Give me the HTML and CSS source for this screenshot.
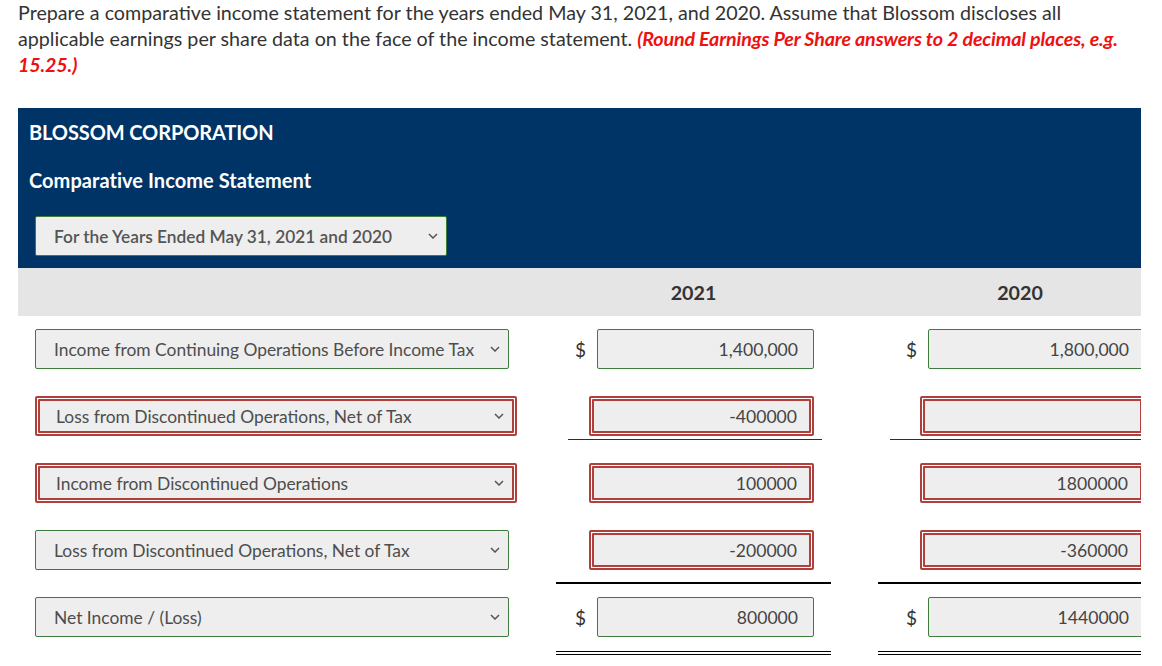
FILE: index.html
```html
<!DOCTYPE html>
<html lang="en">
<head>
<meta charset="utf-8">
<title>Comparative Income Statement</title>
<link rel="stylesheet" href="styles.css">
</head>
<body>
<div class="page">
  <p class="intro">Prepare a comparative income statement for the years ended May 31, 2021, and 2020. Assume that Blossom discloses all applicable earnings per share data on the face of the income statement. <em class="note">(Round Earnings Per Share answers to 2 decimal places, e.g. 15.25.)</em></p>

  <div class="sheet">
    <div class="head">
      <div class="company">BLOSSOM CORPORATION</div>
      <div class="title">Comparative Income Statement</div>
      <div class="select ok period"><span>For the Years Ended May 31, 2021 and 2020</span><svg class="chev" width="10" height="6" viewBox="0 0 10 6"><path d="M1 1l4 4 4-4" fill="none" stroke="#555" stroke-width="1.5"/></svg></div>
    </div>

    <div class="grid years">
      <div></div>
      <div class="yr">2021</div>
      <div class="yr">2020</div>
    </div>

    <div class="grid row first">
      <div class="lab"><div class="select ok"><span>Income from Continuing Operations Before Income Tax</span><svg class="chev" width="10" height="6" viewBox="0 0 10 6"><path d="M1 1l4 4 4-4" fill="none" stroke="#555" stroke-width="1.5"/></svg></div></div>
      <div class="cell"><div class="val"><span class="dol">$</span><div class="inp ok">1,400,000</div></div></div>
      <div class="cell"><div class="val"><span class="dol">$</span><div class="inp ok">1,800,000</div></div></div>
    </div>

    <div class="grid row">
      <div class="lab"><div class="bad wide"><div class="select"><span>Loss from Discontinued Operations, Net of Tax</span><svg class="chev" width="10" height="6" viewBox="0 0 10 6"><path d="M1 1l4 4 4-4" fill="none" stroke="#555" stroke-width="1.5"/></svg></div></div></div>
      <div class="cell u1"><div class="val"><div class="bad num"><div class="inp">-400000</div></div></div></div>
      <div class="cell u1"><div class="val"><div class="bad num"><div class="inp"></div></div></div></div>
    </div>

    <div class="grid row">
      <div class="lab"><div class="bad wide"><div class="select"><span>Income from Discontinued Operations</span><svg class="chev" width="10" height="6" viewBox="0 0 10 6"><path d="M1 1l4 4 4-4" fill="none" stroke="#555" stroke-width="1.5"/></svg></div></div></div>
      <div class="cell"><div class="val"><div class="bad num"><div class="inp">100000</div></div></div></div>
      <div class="cell"><div class="val"><div class="bad num"><div class="inp">1800000</div></div></div></div>
    </div>

    <div class="grid row">
      <div class="lab"><div class="select ok"><span>Loss from Discontinued Operations, Net of Tax</span><svg class="chev" width="10" height="6" viewBox="0 0 10 6"><path d="M1 1l4 4 4-4" fill="none" stroke="#555" stroke-width="1.5"/></svg></div></div>
      <div class="cell u2"><div class="val"><div class="bad num"><div class="inp">-200000</div></div></div></div>
      <div class="cell u2"><div class="val"><div class="bad num"><div class="inp">-360000</div></div></div></div>
    </div>

    <div class="grid row">
      <div class="lab"><div class="select ok"><span>Net Income / (Loss)</span><svg class="chev" width="10" height="6" viewBox="0 0 10 6"><path d="M1 1l4 4 4-4" fill="none" stroke="#555" stroke-width="1.5"/></svg></div></div>
      <div class="cell u3"><div class="val"><span class="dol">$</span><div class="inp ok">800000</div></div></div>
      <div class="cell u3"><div class="val"><span class="dol">$</span><div class="inp ok">1440000</div></div></div>
    </div>
  </div>
</div>
</body>
</html>
```

FILE: styles.css
```css
html, body {
  margin: 0;
  padding: 0;
  background: #fff;
}
body {
  font-family: Lato, "Open Sans", "Liberation Sans", sans-serif;
  color: #333;
}
.page {
  padding: 0 0 0 18px;
}
.intro {
  margin: 0;
  width: 1110px;
  font-size: 19.7px;
  line-height: 26px;
  color: #333;
}
.note {
  color: #ee1111;
  font-weight: 700;
  font-style: italic;
  letter-spacing: -0.15px;
}
.sheet {
  margin-top: 30px;
  width: 1123px;
  overflow: hidden;
}
.head {
  background: #003466;
  color: #fff;
  height: 160px;
  box-sizing: border-box;
  padding: 12px 0 0 11px;
}
.company {
  font-size: 20px;
  font-weight: 700;
  line-height: 24px;
  letter-spacing: -0.1px;
}
.title {
  margin-top: 24px;
  font-size: 20px;
  font-weight: 700;
  line-height: 24px;
  letter-spacing: 0.05px;
}
.select {
  display: flex;
  align-items: center;
  justify-content: space-between;
  box-sizing: border-box;
  height: 40px;
  padding: 0 8px 0 18px;
  background: #eeeeee;
  border-radius: 2px;
  font-size: 17.4px;
  color: #4d4d4d;
  white-space: nowrap;
}
.select.ok {
  border: 1px solid #3c7d3c;
}
.period {
  margin: 24px 0 0 6px;
  width: 412px;
  font-weight: 600;
  font-size: 17.3px;
  color: #555;
}
.chev {
  flex: none;
}
.grid {
  display: grid;
  grid-template-columns: 491px 275px 284px;
  column-gap: 47px;
}
.years {
  background: #e5e5e5;
  height: 48px;
  align-items: center;
}
.yr {
  text-align: center;
  font-size: 19.7px;
  font-weight: 700;
  color: #333;
}
.row {
  height: 67px;
  align-items: start;
}
.row.first {
  margin-top: 13px;
}
.lab {
  padding-left: 17px;
}
.lab .select.ok {
  width: 474px;
}
.bad {
  box-sizing: border-box;
  border: 2px solid #b1403d;
  padding: 1px;
  background: #fff;
  border-radius: 2px;
}
.bad > .select,
.bad > .inp {
  height: 34px;
  border: 2px solid #b1403d;
  border-radius: 1px;
}
.bad.wide {
  width: 482px;
}
.bad.wide > .select {
  padding-left: 16px;
  padding-right: 8px;
}
.cell {
  padding-right: 17px;
}
.val {
  display: flex;
  justify-content: flex-end;
  align-items: center;
  gap: 11px;
  height: 40px;
}
.dol {
  font-size: 19px;
  color: #333;
}
.inp {
  box-sizing: border-box;
  width: 217px;
  height: 40px;
  display: flex;
  align-items: center;
  justify-content: flex-end;
  padding-right: 15px;
  background: #eeeeee;
  font-size: 17.6px;
  color: #444;
  border-radius: 2px;
}
.inp.ok {
  border: 1px solid #3c7d3c;
}
.bad.num {
  width: 225px;
}
.bad.num > .inp {
  width: auto;
  padding-right: 12px;
}
.cell.u1 {
  margin: 0 9px 0 12px;
  padding-right: 8px;
  padding-bottom: 3px;
  border-bottom: 1px solid #24303e;
}
.cell.u2 {
  padding-bottom: 12px;
  border-bottom: 2px solid #000;
}
.cell.u3 {
  padding-bottom: 14px;
  border-bottom: 4px double #000;
}
```
